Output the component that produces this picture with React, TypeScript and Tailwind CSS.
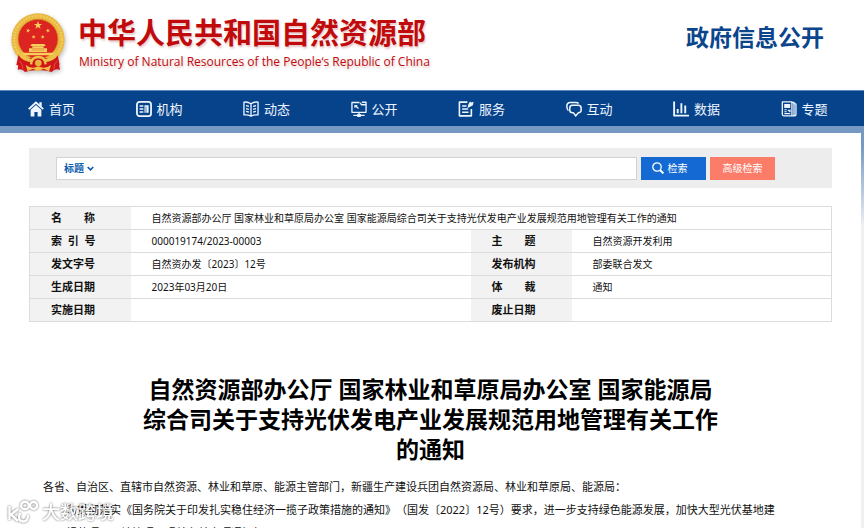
import type { ReactNode } from "react";

const STAR =
  "M0,-10 L2.4,-3.2 L9.5,-3.1 L3.8,1.2 L5.9,8.1 L0,4 L-5.9,8.1 L-3.8,1.2 L-9.5,-3.1 L-2.4,-3.2 Z";

function Emblem() {
  const small = [
    [51, 53, 15],
    [111, 53, -15],
    [68, 72, 8],
    [95, 72, -8],
  ];
  return (
    <svg
      className="h-[62px] w-[55px] shrink-0 drop-shadow-[1px_2px_2px_rgba(0,0,0,0.25)]"
      viewBox="0 0 165 186"
      role="img"
      aria-label="国徽"
    >
      <path d="M26 125 L20 170 Q34 165 42 177 Q60 170 82 172 Q104 170 122 177 Q130 165 147 170 L138 125 Z" fill="#d0161b" />
      <ellipse cx="81" cy="80" rx="80" ry="79" fill="#e8b840" />
      <ellipse cx="81" cy="80" rx="72" ry="71" fill="none" stroke="#f3cd62" strokeWidth="8" strokeDasharray="5 4" />
      <ellipse cx="81" cy="78" rx="60" ry="59" fill="#dc2420" stroke="#cf961f" strokeWidth="2" />
      <g fill="#f6cf5c">
        <path d={STAR} transform="translate(81 37) scale(1.3)" />
        {small.map(([x, y, r]) => (
          <path key={`${x}-${y}`} d={STAR} transform={`translate(${x} ${y}) rotate(${r}) scale(.66)`} />
        ))}
        <path d="M58 99 L62 93 H100 L104 99 Z M64 100 H98 V105 H64 Z M54 106 H108 V117 H54 Z M32 119 H130 L125 127 H37 Z" />
      </g>
      <path d="M62 111 H100" stroke="#d58325" strokeWidth="2" />
      <path d="M22 126 Q42 138 62 134 Q82 126 102 134 Q122 138 140 126 L146 156 Q122 160 112 172 Q82 156 52 172 Q42 160 16 156 Z" fill="#cf171a" />
      <path d="M30 118 Q48 140 68 138 L62 148 Q36 146 22 126 Z M133 118 Q116 140 95 138 L101 148 Q128 146 141 126 Z" fill="#efc04a" />
      <path d="M60 154 Q62 132 82 132 Q102 132 104 154" stroke="#f0bf48" strokeWidth="7" fill="none" />
      <circle cx="82" cy="150" r="10" fill="#e9b23d" />
      <path d="M44 156 Q62 170 82 160 Q102 170 120 156 L114 175 L98 167 L82 175 L66 167 L50 175 Z" fill="#f0bd45" />
      <path d="M26 144 Q34 150 36 168 M138 144 Q130 150 128 168" stroke="#ef4a3a" strokeWidth="3" fill="none" />
    </svg>
  );
}

function Icon({ children }: { children: ReactNode }) {
  return (
    <svg
      className="size-4 shrink-0"
      viewBox="0 0 17 17"
      fill="none"
      stroke="#eef5ff"
      strokeWidth="1.6"
      strokeLinejoin="round"
      aria-hidden="true"
    >
      {children}
    </svg>
  );
}

const navItems: { label: string; icon: ReactNode }[] = [
  {
    label: "首页",
    icon: (
      <>
        <path d="M.8 8.6 L8.4 1.6 L16.2 8.6" strokeWidth="2" />
        <path d="M12 1.2 H14.6 V6.2 L12 4 Z" fill="#eef5ff" stroke="none" />
        <path d="M2.8 9.2 L8.4 4.2 L14.2 9.2 V16.6 H10.2 V11.6 H6.8 V16.6 H2.8 Z" fill="#eef5ff" stroke="none" />
      </>
    ),
  },
  {
    label: "机构",
    icon: (
      <>
        <rect x="1" y="1" width="15" height="15" rx="2.8" strokeWidth="1.9" />
        <path d="M3.8 5.3 H7.8 M3.8 8.5 H7.8 M3.8 11.7 H7.8" />
        <path d="M9 4.5 H13.4 V12.5 H9 Z" fill="#eef5ff" stroke="none" />
        <path d="M10.6 6 V12.5" stroke="#07438a" strokeWidth=".7" />
      </>
    ),
  },
  {
    label: "动态",
    icon: (
      <>
        <path d="M8.5 3 Q5 .5 1 1.2 V14.8 Q5 14.3 8.5 16 Q12 14.3 16 14.8 V1.2 Q12 .5 8.5 3 V16" strokeWidth="1.4" />
        <path
          d="M3.2 5 L6.3 5.8 M3.2 8 L6.3 8.8 M3.2 11 L6.3 11.8 M13.8 5 L10.7 5.8 M13.8 8 L10.7 8.8 M13.8 11 L10.7 11.8"
          strokeWidth="1.4"
        />
      </>
    ),
  },
  {
    label: "公开",
    icon: (
      <>
        <path d="M9 1.6 H1 V12 H16 V4 H11 L9.8 1.8 M11.5 1.3 H16 V4" strokeWidth="1.4" />
        <path d="M8.5 12 V15 M2.5 15.3 H14.5" strokeWidth="1.4" />
        <path d="M6.6 13.8 H10.4 V17 H6.6 Z M3.6 4.2 H7.2 L6.2 5.4 L8.4 7.4 L7.4 8.4 L5.2 6.4 L3.6 7.6 Z" fill="#eef5ff" stroke="none" />
      </>
    ),
  },
  {
    label: "服务",
    icon: (
      <>
        <path d="M10 1.2 H1.5 V15.8 H14.2 V8.5" strokeWidth="1.7" />
        <path d="M4.4 5.2 H9 M4.4 8.6 H10.8 M4.4 12 H11.2" />
        <path d="M10.2 7.4 L10.8 4 L12.8 .6 L14.2 1.6 L16.6 .8 L15.8 4.6 L13 6 Z" fill="#eef5ff" stroke="none" />
      </>
    ),
  },
  {
    label: "互动",
    icon: (
      <>
        <path d="M2.6 10.2 Q.8 9 .9 5.5 Q.9 1.6 4.5 1.5 H10.5 Q12.6 1.5 13.4 2.6" />
        <path d="M6.8 4.6 H13 Q16.1 4.6 16.1 7.6 V9.6 Q16.1 12.5 13.2 12.6 L10.2 15.8 L8 12.6 H6.8 Q4 12.6 4 9.6 V7.6 Q4 4.6 6.8 4.6 Z" />
      </>
    ),
  },
  {
    label: "数据",
    icon: <path d="M1.2 .6 V15.6 H17 M5 8.6 V13 M8.9 2.4 V13 M13 4.8 V13" strokeWidth="2" />,
  },
  {
    label: "专题",
    icon: (
      <>
        <path
          d="M1.4 1 H11.6 V15.8 H3 Q1.4 15.8 1.4 14.2 Z M11.6 1.6 H13.8 V15.8 H11.6 M13.8 2.4 L15.9 3.2 V14.6 Q15.6 15.8 13.8 15.8 H3"
          strokeWidth="1.4"
        />
        <path d="M3.4 3.2 H9.8 V7.4 H3.4 Z" fill="#eef5ff" stroke="none" />
        <path d="M3.6 9.4 H6 M3.6 11.4 H6 M3.6 13.4 H9.8 M7.2 9.4 L9.6 11.4 M9.6 9 V12" strokeWidth="1.1" />
      </>
    ),
  },
];

const rows = [
  ["索\u00a0\u00a0引\u00a0\u00a0号", "000019174/2023-00003", "主\u3000\u3000题", "自然资源开发利用"],
  ["发文字号", "自然资办发〔2023〕12号", "发布机构", "部委联合发文"],
  ["生成日期", "2023年03月20日", "体\u3000\u3000裁", "通知"],
  ["实施日期", "", "废止日期", ""],
];

const thClass = "bg-[#f2f2f2] pl-[21px] text-left text-[11px] font-bold";
const tdClass = "pl-[21px] text-[10px]";

function Watermark() {
  return (
    <div className="absolute bottom-1 left-2 flex items-center gap-1 opacity-85 drop-shadow-[0_0_1px_rgba(0,0,0,0.7)]">
      <svg className="h-6 w-[30px]" viewBox="0 0 30 24" fill="none" stroke="#fff" strokeWidth="2.4" aria-hidden="true">
        <path d="M1.5 6 V20 M10 9 L3 14.5 L10 21" />
        <path d="M12 13 Q9 21 15 21.5 Q20 21.5 20 15" />
        <circle cx="17" cy="5.5" r="3.8" />
        <circle cx="25.5" cy="5.5" r="3.5" />
      </svg>
      <span className="text-lg leading-6 font-medium text-white">大数跨境</span>
    </div>
  );
}

export default function App() {
  return (
    <div className="relative flex h-screen flex-col overflow-hidden bg-white font-['Noto_Sans','Noto_Sans_CJK_SC',sans-serif] text-[#111]">
      <header className="flex h-[90px] shrink-0 items-start justify-between pr-10 pl-[11px]">
        <div className="flex gap-3 pt-[13px]">
          <Emblem />
          <div className="whitespace-nowrap text-[#c00a0c] [text-shadow:1px_2px_2px_rgba(160,40,40,0.25)]">
            <h1 className="text-[29px] leading-10 font-bold">中华人民共和国自然资源部</h1>
            <p className="pl-px font-['Open_Sans',sans-serif] text-xs leading-[18px]">
              Ministry of Natural Resources of the People‘s Republic of China
            </p>
          </div>
        </div>
        <p className="pt-[19px] text-[23px] leading-9 font-bold whitespace-nowrap text-[#0b458c]">政府信息公开</p>
      </header>

      <nav className="h-9 shrink-0 border-t border-[#5e88b8] bg-[#07438a] pr-1">
        <ul className="grid h-full grid-cols-8">
          {navItems.map((item) => (
            <li key={item.label} className="flex items-center pl-7">
              <a href="#" className="flex items-center gap-[5px] text-[13px] leading-5 text-[#eef5ff]">
                <Icon>{item.icon}</Icon>
                {item.label}
              </a>
            </li>
          ))}
        </ul>
      </nav>

      <div className="min-h-0 flex-1 bg-linear-to-b from-[#7699c3] from-5% to-[#eff0f2] to-25% pt-[7px] pr-[3px]">
        <main className="h-full bg-white pt-[15px] pr-[29px] pl-[29px]">
          <form
            className="flex h-10 items-center gap-1 bg-[#ededed] pr-[57px] pl-[27px] text-[10px]"
            onSubmit={(e) => e.preventDefault()}
          >
            <div className="flex h-[23px] flex-1 items-center border border-[#d3d3d3] bg-white pl-[7px]">
              <div className="relative flex items-center">
                <select
                  aria-label="检索字段"
                  className="w-8 appearance-none bg-transparent font-bold text-[#0b5cab] outline-none"
                >
                  <option>标题</option>
                </select>
                <svg
                  className="pointer-events-none absolute right-[2px] size-[7px]"
                  viewBox="0 0 7 7"
                  fill="none"
                  stroke="#0b5cab"
                  strokeWidth="1.6"
                  aria-hidden="true"
                >
                  <path d="M.7 2 L3.5 4.8 L6.3 2" />
                </svg>
              </div>
              <input aria-label="检索词" type="text" className="h-full min-w-0 flex-1 bg-transparent px-1 outline-none" />
            </div>
            <button type="submit" className="flex h-[23px] w-[65px] items-center justify-center gap-1 bg-[#146ad2] pr-2 text-white">
              <svg className="size-3" viewBox="0 0 12 12" fill="none" stroke="#fff" strokeWidth="1.3" aria-hidden="true">
                <circle cx="5" cy="5" r="4.2" />
                <path d="M8.2 8.2 L11.4 11.4" strokeWidth="2" />
              </svg>
              检索
            </button>
            <button type="button" className="h-[23px] w-[65px] bg-[#fb7c69] text-white">
              高级检索
            </button>
          </form>

          <table className="mt-[18px] w-full table-fixed border-collapse border border-[#dcdcdc] leading-4">
            <colgroup>
              <col className="w-[101px]" />
              <col className="w-[340px]" />
              <col className="w-[101px]" />
              <col />
            </colgroup>
            <tbody>
              <tr className="h-[23px] border-b border-[#dcdcdc]">
                <th scope="row" className={thClass}>
                  {"名\u3000\u3000称"}
                </th>
                <td colSpan={3} className={tdClass}>
                  自然资源部办公厅 国家林业和草原局办公室 国家能源局综合司关于支持光伏发电产业发展规范用地管理有关工作的通知
                </td>
              </tr>
              {rows.map(([a, b, c, d]) => (
                <tr key={a} className="h-[23px] border-b border-[#dcdcdc]">
                  <th scope="row" className={thClass}>
                    {a}
                  </th>
                  <td className={tdClass}>{b}</td>
                  <th scope="row" className={thClass}>
                    {c}
                  </th>
                  <td className={tdClass}>{d}</td>
                </tr>
              ))}
            </tbody>
          </table>

          <article>
            <h2 className="mt-[52px] text-center text-[23px] leading-[30px] font-bold text-black">
              自然资源部办公厅 国家林业和草原局办公室 国家能源局
              <br />
              综合司关于支持光伏发电产业发展规范用地管理有关工作
              <br />
              的通知
            </h2>
            <div className="mt-[11px] pl-[14px] text-[11px] leading-[23px] whitespace-nowrap [text-spacing-trim:space-all]">
              <p>各省、自治区、直辖市自然资源、林业和草原、能源主管部门，新疆生产建设兵团自然资源局、林业和草原局、能源局：</p>
              <p className="pl-[23px]">
                为贯彻落实《国务院关于印发扎实稳住经济一揽子政策措施的通知》（国发〔2022〕12号）要求，进一步支持绿色能源发展，加快大型光伏基地建
                <br />
                规范项目用地管理，现就有关事项通知如下：
              </p>
            </div>
          </article>
        </main>
      </div>
      <Watermark />
    </div>
  );
}
